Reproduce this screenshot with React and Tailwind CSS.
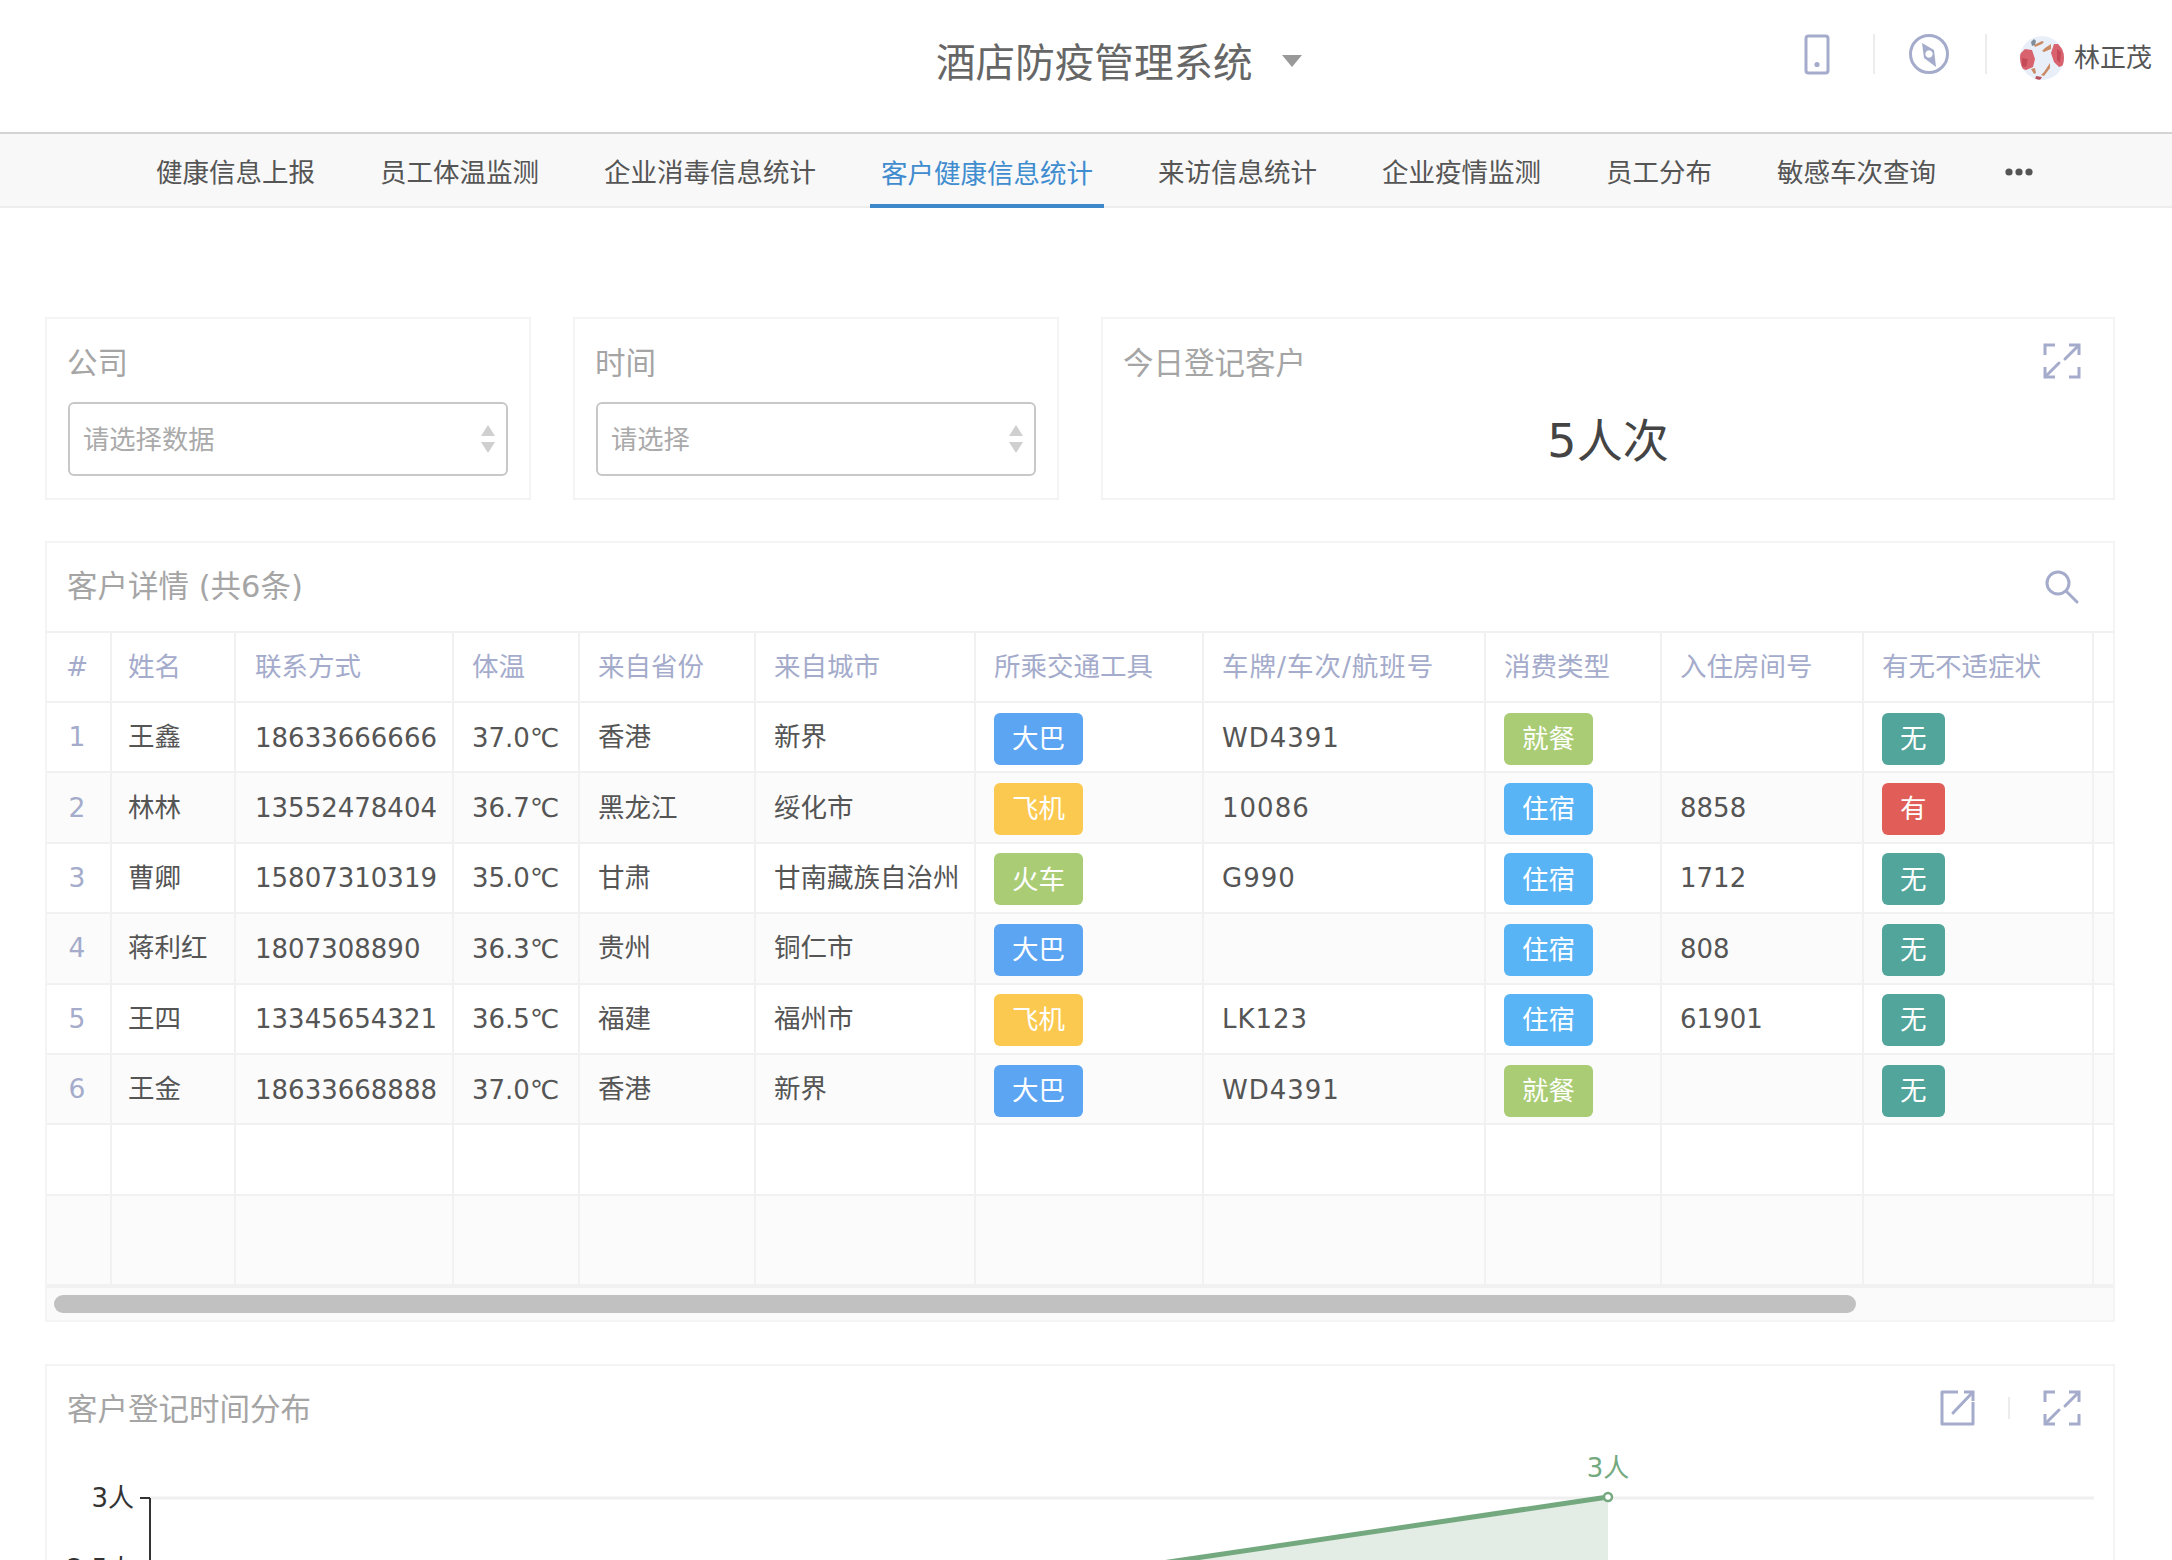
import React from "react";

const tabs = [
  "健康信息上报",
  "员工体温监测",
  "企业消毒信息统计",
  "客户健康信息统计",
  "来访信息统计",
  "企业疫情监测",
  "员工分布",
  "敏感车次查询",
];

const columns = [
  { title: "#", width: "w-[65px]", cell: "pr-[3px] text-center" },
  { title: "姓名", width: "w-[124px]", cell: "pl-[16px] text-left" },
  { title: "联系方式", width: "w-[218px]", cell: "pl-[19px] text-left" },
  { title: "体温", width: "w-[126px]", cell: "pl-[18px] text-left" },
  { title: "来自省份", width: "w-[176px]", cell: "pl-[18px] text-left" },
  { title: "来自城市", width: "w-[220px]", cell: "pl-[18px] text-left" },
  { title: "所乘交通工具", width: "w-[228px]", cell: "pl-[18px] text-left" },
  { title: "车牌/车次/航班号", width: "w-[282px]", cell: "pl-[18px] text-left tracking-[1px]" },
  { title: "消费类型", width: "w-[176px]", cell: "pl-[18px] text-left" },
  { title: "入住房间号", width: "w-[202px]", cell: "pl-[18px] text-left" },
  { title: "有无不适症状", width: "w-[230px]", cell: "pl-[18px] text-left" },
  { title: "活动轨迹", width: "w-[200px]", cell: "pl-[18px] text-left" },
];

const tagColors = {
  大巴: "bg-[#5ca5f3]",
  飞机: "bg-[#fbc94f]",
  火车: "bg-[#a9cc75]",
  就餐: "bg-[#a9cc75]",
  住宿: "bg-[#58b4f5]",
  无: "bg-[#52a59a]",
  有: "bg-[#e05e57]",
};

const customers = [
  ["王鑫", "18633666666", "37.0℃", "香港", "新界", "大巴", "WD4391", "就餐", "", "无", ""],
  ["林林", "13552478404", "36.7℃", "黑龙江", "绥化市", "飞机", "10086", "住宿", "8858", "有", "湖北"],
  ["曹卿", "15807310319", "35.0℃", "甘肃", "甘南藏族自治州", "火车", "G990", "住宿", "1712", "无", ""],
  ["蒋利红", "1807308890", "36.3℃", "贵州", "铜仁市", "大巴", "", "住宿", "808", "无", ""],
  ["王四", "13345654321", "36.5℃", "福建", "福州市", "飞机", "LK123", "住宿", "61901", "无", ""],
  ["王金", "18633668888", "37.0℃", "香港", "新界", "大巴", "WD4391", "就餐", "", "无", ""],
];

const tagColumns = [5, 7, 9];
const numberColumns = [1, 2, 6, 8];

const ExpandIcon = () => (
  <svg width="38" height="36" viewBox="0 0 38 36" fill="none" stroke="#a4abcb" strokeWidth="3">
    <path d="M12 2H2v10M26 2h10v10M2 24v10h10M36 24v10H26" />
    <path d="M35 3L22 16M3 33l13-13" strokeLinecap="round" />
  </svg>
);

const OpenIcon = () => (
  <svg width="35" height="36" viewBox="0 0 35 36" fill="none" stroke="#a4abcb" strokeWidth="3">
    <path d="M18 2H2v32h31V12" strokeLinejoin="round" />
    <path d="M24 2h9v9" />
    <path d="M32 3L13 23" strokeLinecap="round" />
  </svg>
);

const SearchIcon = () => (
  <svg width="34" height="34" viewBox="0 0 34 34" fill="none" stroke="#a4abcb" strokeWidth="3">
    <circle cx="13" cy="13" r="11" />
    <path d="M21 21l11 11" strokeLinecap="round" />
  </svg>
);

const PhoneIcon = () => (
  <svg width="26" height="41" viewBox="0 0 26 41" fill="none">
    <rect x="2" y="2" width="22" height="37" rx="2.5" stroke="#a4abcb" strokeWidth="3" />
    <circle cx="13" cy="30.5" r="2.6" fill="#a4abcb" />
  </svg>
);

const CompassIcon = () => (
  <svg width="40" height="40" viewBox="0 0 40 40" fill="none">
    <circle cx="20" cy="20" r="18.5" stroke="#a4abcb" strokeWidth="3" />
    <path
      fillRule="evenodd"
      fill="#a4abcb"
      d="M13 9l12 7 2 17-12-9zM20 16.3a3.7 3.7 0 1 0 .01 0z"
    />
  </svg>
);

const Avatar = () => (
  <svg width="44" height="44" viewBox="0 0 44 44" className="rounded-full">
    <rect width="44" height="44" fill="#e9eff9" />
    <path d="M0 18l5-5 7 1 3 9-2 8-7 3-6-2z" fill="#d8636f" />
    <path d="M34 8l4 0 6 7v14l-5 2-5-5-3-9z" fill="#d8636f" />
    <path d="M2 22l6 1-2 8-4-1zM37 13l4 3-1 11-3-3z" fill="#c44a58" />
    <path d="M11 6l3-3 2 2-1 4-3 1z" fill="#7f8c9c" />
    <path d="M14 9l8-4 2 1-2 2-7 3zM31 8l-6 4-3 3 2 1 7-3z" fill="#c98a64" />
    <path d="M11 33l3 5 2-1-1-5zM30 27l-6 9-3 3 3 1 6-8z" fill="#c98a64" />
    <path d="M16 40l6 1-2 3h-5z" fill="#b8505f" />
  </svg>
);

const SelectBox = ({ placeholder }) => (
  <div className="mt-[17px] flex h-[74px] items-center justify-between rounded-[6px] border-2 border-[#c8c8c8] bg-white pl-[13px] pr-[11px]">
    <span className="pt-[3px] text-[26.3px] text-[#aaaaaa]">{placeholder}</span>
    <span className="flex flex-col gap-[6px]">
      <svg width="14" height="11" viewBox="0 0 14 11">
        <path d="M7 0l7 11H0z" fill="#cfcfcf" />
      </svg>
      <svg width="14" height="11" viewBox="0 0 14 11">
        <path d="M0 0h14L7 11z" fill="#cfcfcf" />
      </svg>
    </span>
  </div>
);

const Card = ({ children, className }) => (
  <div className={`border-2 border-[#f4f4f4] bg-white ${className}`}>{children}</div>
);

const CustomerRow = ({ row, index }) => (
  <tr className={`h-[70.4px] ${index % 2 === 1 ? "bg-[#fbfbfb]" : "bg-white"}`}>
    <td className="border-b-2 border-r-2 border-[#f1f1f1] pr-[3px] text-center text-[#a4abcb]">{index + 1}</td>
    {row.map((value, cellIndex) => (
      <td
        key={cellIndex}
        className={`overflow-hidden whitespace-nowrap border-b-2 border-r-2 border-[#f1f1f1] text-[#555555] ${columns[cellIndex + 1].cell} ${numberColumns.includes(cellIndex) ? "pt-[2px] text-[26px]" : ""}`}
      >
        {tagColumns.includes(cellIndex) ? (
          <span className={`mt-[3px] inline-flex h-[52px] items-center rounded-[6px] px-[18px] align-middle text-white ${tagColors[value]}`}>
            {value}
          </span>
        ) : (
          value
        )}
      </td>
    ))}
  </tr>
);

const EmptyRow = ({ className }) => (
  <tr className={className}>
    {columns.map((column) => (
      <td key={column.title} className="border-b-2 border-r-2 border-[#f1f1f1]" />
    ))}
  </tr>
);

const App = () => {
  return (
    <div className="h-[1560px] overflow-hidden bg-white [font-family:DejaVu_Sans,Noto_Sans_CJK_SC,sans-serif] text-[26px] text-[#555555]">
      <header className="flex h-[134px] items-center justify-between border-b-2 border-[#d4d4d4] pb-[16px] pl-[936px] pr-[20px]">
        <div className="mt-[9px] flex items-center gap-[29px]">
          <span className="mt-[3px] text-[39.6px] leading-none text-[#666666]">酒店防疫管理系统</span>
          <svg width="20" height="12" viewBox="0 0 20 12" className="mb-[3px]">
            <path d="M0 0h20L10 12z" fill="#999999" />
          </svg>
        </div>
        <div className="flex items-center">
          <span className="-mt-[8px]">
            <PhoneIcon />
          </span>
          <span className="-mt-[8px] ml-[43px] h-[40px] w-[2px] bg-[#ececec]" />
          <span className="-mt-[8px] ml-[34px]">
            <CompassIcon />
          </span>
          <span className="-mt-[8px] ml-[36px] h-[40px] w-[2px] bg-[#ececec]" />
          <span className="ml-[33px] flex items-center gap-[10px]">
            <Avatar />
            <span>林正茂</span>
          </span>
        </div>
      </header>

      <nav className="flex h-[74px] items-stretch border-b-2 border-[#ededed] bg-[#f8f8f8] pl-[145px]">
        {tabs.map((tab) => (
          <a
            key={tab}
            className={
              tab === "客户健康信息统计"
                ? "mr-[43px] -mb-[2px] flex items-center border-b-4 border-[#3c88cb] px-[11px] pt-[9px] text-[26.5px] text-[#3f8ccf]"
                : "mr-[43px] flex items-center px-[11px] pt-[5px] text-[26.5px] text-[#555555]"
            }
          >
            {tab}
          </a>
        ))}
        <span className="ml-[15px] flex items-center pt-[4px]">
          <svg width="28" height="8" viewBox="0 0 28 8">
            <circle cx="4" cy="4" r="3.6" fill="#555555" />
            <circle cx="14" cy="4" r="3.6" fill="#555555" />
            <circle cx="24" cy="4" r="3.6" fill="#555555" />
          </svg>
        </span>
      </nav>

      <main className="px-[45px] pt-[109px] pr-[57px]">
        <div className="grid grid-cols-[486px_486px_1fr] gap-[42px]">
          <Card className="h-[183px] px-[21px] pt-[24px]">
            <div className="-ml-[1px] text-[30.5px] leading-[42px] text-[#a5a5a5]">公司</div>
            <SelectBox placeholder="请选择数据" />
          </Card>
          <Card className="h-[183px] px-[21px] pt-[24px]">
            <div className="-ml-[1px] text-[30.5px] leading-[42px] text-[#a5a5a5]">时间</div>
            <SelectBox placeholder="请选择" />
          </Card>
          <Card className="relative h-[183px] px-[20px] pt-[24px]">
            <div className="text-[30.5px] leading-[42px] text-[#a5a5a5]">今日登记客户</div>
            <div className="mt-[20px] text-center text-[46px] leading-[72px] text-[#444444]">5人次</div>
            <span className="absolute right-[32px] top-[24px]">
              <ExpandIcon />
            </span>
          </Card>
        </div>

        <Card className="mt-[41px] overflow-hidden">
          <div className="flex h-[88px] items-center justify-between pl-[20px] pr-[34px]">
            <span className="text-[30.5px] text-[#a5a5a5]">客户详情 (共6条)</span>
            <SearchIcon />
          </div>
          <div className="overflow-hidden">
            <table className="w-[2247px] table-fixed border-separate border-spacing-0 text-[26.5px]">
              <thead>
                <tr className="h-[72px]">
                  {columns.map((column) => (
                    <th
                      key={column.title}
                      className={`${column.width} ${column.cell} border-y-2 border-r-2 border-[#f1f1f1] font-normal text-[#a4abcb]`}
                    >
                      {column.title}
                    </th>
                  ))}
                </tr>
              </thead>
              <tbody>
                {customers.map((row, index) => (
                  <CustomerRow key={row[0]} row={row} index={index} />
                ))}
                <EmptyRow className="h-[70.4px] bg-white" />
                <EmptyRow className="h-[90px] bg-[#fbfbfb]" />
              </tbody>
            </table>
          </div>
          <div className="h-[34px] border-t-2 border-[#f1f1f1] bg-[#fafafa] pl-[7px] pt-[7px]">
            <div className="h-[18px] w-[1802px] rounded-full bg-[#c1c1c1]" />
          </div>
        </Card>

        <Card className="relative mt-[42px] h-[500px]">
          <div className="flex h-[84px] items-center justify-between pl-[20px] pr-[32px]">
            <span className="pt-[4px] text-[30.5px] text-[#a5a5a5]">客户登记时间分布</span>
            <div className="flex items-center">
              <OpenIcon />
              <span className="mx-[33px] h-[22px] w-[2px] bg-[#ececec]" />
              <ExpandIcon />
            </div>
          </div>
          <svg width="2066" height="220" viewBox="0 0 2066 220" className="block">
            <line x1="103" y1="48" x2="2047" y2="48" stroke="#efefef" strokeWidth="3" />
            <line x1="103" y1="48" x2="103" y2="220" stroke="#333333" strokeWidth="2" />
            <line x1="93" y1="48" x2="103" y2="48" stroke="#333333" strokeWidth="2" />
            <line x1="93" y1="118" x2="103" y2="118" stroke="#333333" strokeWidth="2" />
            <text x="87" y="57" textAnchor="end" fontSize="26" fill="#333333">3人</text>
            <text x="87" y="128" textAnchor="end" fontSize="26" fill="#333333">2.5人</text>
            <path d="M1000 130L1561 47V220H1000z" fill="#e3ede5" />
            <path d="M1000 130L1561 47" stroke="#74a97f" strokeWidth="5" fill="none" />
            <circle cx="1561" cy="47" r="4" fill="#ffffff" stroke="#74a97f" strokeWidth="2.5" />
            <text x="1561" y="27" textAnchor="middle" fontSize="26" fill="#74a97f">3人</text>
          </svg>
        </Card>
      </main>
    </div>
  );
};

export default App;
